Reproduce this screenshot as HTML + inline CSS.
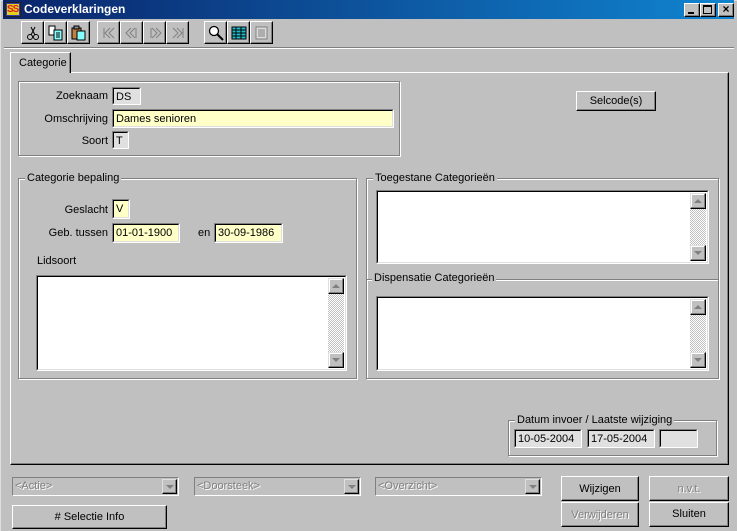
<!DOCTYPE html>
<html><head><meta charset="utf-8">
<style>
*{box-sizing:border-box;margin:0;padding:0}
body{width:737px;height:531px;background:#c0c0c0;font-family:"Liberation Sans",sans-serif;font-size:11px;color:#000;position:relative;overflow:hidden}
.a{position:absolute}
.in{position:absolute;border-top:1px solid #808080;border-left:1px solid #808080;border-right:1px solid #fff;border-bottom:1px solid #fff;}
.in::before{content:"";position:absolute;left:0;top:0;right:0;bottom:0;border-top:1px solid #000;border-left:1px solid #000;border-right:1px solid #dfdfdf;border-bottom:1px solid #dfdfdf}
.in span{position:absolute;left:3px;top:3px;white-space:nowrap}
.g{background:#e0e0e0}.y{background:#ffffc8}.w{background:#fff}
.grp{position:absolute;border:1px solid #808080;box-shadow:1px 1px 0 #fff, inset 1px 1px 0 #fff}
.lg{position:absolute;background:#c0c0c0;padding:0 2px;top:-7px;left:6px;white-space:nowrap}
.lbl{position:absolute;white-space:nowrap;text-align:right}
.btn{position:absolute;background:#c0c0c0;border-top:1px solid #fff;border-left:1px solid #fff;border-right:1px solid #000;border-bottom:1px solid #000;box-shadow:inset -1px -1px 0 #808080;text-align:center;white-space:nowrap}
.dis{color:#808080;text-shadow:1px 1px 0 #fff}
.sb{position:absolute;right:2px;top:2px;bottom:2px;width:16px;background-image:repeating-conic-gradient(#c0c0c0 0 25%,#fff 0 50%);background-size:2px 2px}
.sbb{position:absolute;left:0;width:16px;height:16px;background:#c0c0c0;border-top:1px solid #dfdfdf;border-left:1px solid #dfdfdf;border-right:1px solid #000;border-bottom:1px solid #000;box-shadow:inset -1px -1px 0 #808080,inset 1px 1px 0 #fff}
.up::after{content:"";position:absolute;left:3px;top:5px;border-left:4px solid transparent;border-right:4px solid transparent;border-bottom:4px solid #808080}
.dn::after{content:"";position:absolute;left:3px;top:5px;border-left:4px solid transparent;border-right:4px solid transparent;border-top:4px solid #808080}
.tb{position:absolute;top:21px;width:23px;height:23px;background:#c0c0c0;border-top:1px solid #fff;border-left:1px solid #fff;border-right:1px solid #000;border-bottom:1px solid #000;box-shadow:inset -1px -1px 0 #808080}
.tb svg{position:absolute;left:3px;top:3px}
.cb{position:absolute;height:19px;background:#c0c0c0;border-top:1px solid #808080;border-left:1px solid #808080;border-right:1px solid #fff;border-bottom:1px solid #fff;color:#808080}
.cb span{position:absolute;left:2px;top:2px;text-shadow:1px 1px 0 #fff}
.cb i{position:absolute;right:1px;top:1px;width:15px;height:15px;border-top:1px solid #dfdfdf;border-left:1px solid #dfdfdf;border-right:1px solid #000;border-bottom:1px solid #000;box-shadow:inset -1px -1px 0 #808080}
.cb i::after{content:"";position:absolute;left:3px;top:5px;border-left:4px solid transparent;border-right:4px solid transparent;border-top:4px solid #808080}
</style></head><body>
<div class="a" style="left:0;top:0;width:737px;height:531px;border-left:1px solid #dfdfdf;border-top:1px solid #dfdfdf;"></div>
<div class="a" style="left:3px;top:0;width:731px;height:19px;background:linear-gradient(90deg,#0a246a,#1084d0)"></div>
<div class="a" style="left:5px;top:2px;width:16px;height:15px;background:#3a3aa0;border:1px solid #222"><div class="a" style="left:1px;top:1px;width:12px;height:11px;background:#e0d020;color:#e02020;font-weight:bold;font-size:10px;line-height:11px;letter-spacing:-1px">SS</div></div>
<div class="a" style="left:24px;top:2px;color:#fff;font-weight:bold;font-size:12px">Codeverklaringen</div>
<div class="btn" style="left:684px;top:3px;width:16px;height:14px"><div class="a" style="left:3px;top:8px;width:6px;height:2px;background:#000"></div></div>
<div class="btn" style="left:700px;top:3px;width:16px;height:14px"><div class="a" style="left:2px;top:1px;width:9px;height:9px;border:1px solid #000;border-top-width:2px"></div></div>
<div class="btn" style="left:718px;top:3px;width:16px;height:14px;font-weight:bold;line-height:11px;font-size:12px">×</div>
<div class="tb" style="left:21px"><svg width="16" height="16"><circle cx="5" cy="12" r="2.5" fill="none" stroke="#000"/><circle cx="11" cy="12" r="2.5" fill="none" stroke="#000"/><path d="M6 10L10 2M10 10L6 2" stroke="#000"/></svg></div>
<div class="tb" style="left:44px"><svg width="16" height="16"><path d="M1 1h6v9H1z" fill="#fff" stroke="#000"/><path d="M6 5h8v10H6z" fill="#8ff" stroke="#000"/><path d="M8 8h4M8 10h4M8 12h4" stroke="#000"/></svg></div>
<div class="tb" style="left:67px"><svg width="16" height="16"><path d="M1 3h9v11H1z" fill="#c08040" stroke="#000"/><path d="M3 1h5v3H3z" fill="#888" stroke="#000"/><path d="M6 6h8v9H6z" fill="#8ff" stroke="#000"/></svg></div>
<div class="tb" style="left:97px"><svg width="16" height="16" stroke="#808080" fill="none"><path d="M3 3v10M13 3l-5 5 5 5M9 3l-5 5 5 5"/></svg></div>
<div class="tb" style="left:120px"><svg width="16" height="16" stroke="#808080" fill="none"><path d="M11 3l-5 5 5 5M7 3L2 8l5 5M12 3v10"/></svg></div>
<div class="tb" style="left:143px"><svg width="16" height="16" stroke="#808080" fill="none"><path d="M4 3v10M5 3l5 5-5 5M9 3l5 5-5 5"/></svg></div>
<div class="tb" style="left:166px"><svg width="16" height="16" stroke="#808080" fill="none"><path d="M3 3l5 5-5 5M7 3l5 5-5 5M13 3v10"/></svg></div>
<div class="tb" style="left:204px"><svg width="16" height="16"><circle cx="6" cy="6" r="4.5" fill="#fff" stroke="#000" stroke-width="1.3"/><path d="M9 9l6 6" stroke="#000" stroke-width="2"/></svg></div>
<div class="tb" style="left:227px"><svg width="16" height="16"><rect x="1" y="2" width="14" height="12" fill="#2bc" stroke="#000"/><path d="M1 5h14M1 8h14M1 11h14M5 2v12M10 2v12" stroke="#000"/></svg></div>
<div class="tb" style="left:250px"><svg width="16" height="16"><rect x="2" y="2" width="11" height="12" fill="#ddd" stroke="#808080"/><path d="M4 5h7M4 7h7M4 9h7M4 11h7" stroke="#808080"/></svg></div>
<div class="a" style="left:4px;top:47px;width:730px;height:2px;border-top:1px solid #808080;border-bottom:1px solid #fff"></div>
<div class="a" style="left:10px;top:52px;width:61px;height:21px;border-top:1px solid #fff;border-left:1px solid #fff;border-right:1px solid #000;box-shadow:inset -1px 0 #808080;background:#c0c0c0;z-index:2;padding:4px 0 0 8px">Categorie</div>
<div class="a" style="left:10px;top:72px;width:719px;height:393px;border-top:1px solid #fff;border-left:1px solid #fff;border-right:1px solid #000;border-bottom:1px solid #000;box-shadow:inset -1px -1px 0 #808080"></div>
<div class="grp" style="left:18px;top:81px;width:382px;height:75px"></div>
<div class="lbl" style="right:629px;top:90px">Zoeknaam</div>
<div class="in g" style="left:112px;top:87px;width:29px;height:18px"><span>DS</span></div>
<div class="lbl" style="right:629px;top:113px">Omschrijving</div>
<div class="in y" style="left:112px;top:109px;width:282px;height:19px"><span>Dames senioren</span></div>
<div class="lbl" style="right:629px;top:135px">Soort</div>
<div class="in g" style="left:112px;top:131px;width:17px;height:18px"><span>T</span></div>
<div class="btn" style="left:576px;top:91px;width:80px;height:20px;padding-top:3px">Selcode(s)</div>
<div class="grp" style="left:18px;top:178px;width:339px;height:201px"><div class="lg">Categorie bepaling</div></div>
<div class="lbl" style="right:629px;top:204px">Geslacht</div>
<div class="in y" style="left:112px;top:199px;width:18px;height:20px"><span>V</span></div>
<div class="lbl" style="right:629px;top:227px">Geb. tussen</div>
<div class="in y" style="left:112px;top:223px;width:68px;height:20px"><span>01-01-1900</span></div>
<div class="lbl" style="left:198px;top:227px">en</div>
<div class="in y" style="left:214px;top:223px;width:69px;height:20px"><span>30-09-1986</span></div>
<div class="lbl" style="left:37px;top:255px">Lidsoort</div>
<div class="in w" style="left:36px;top:275px;width:311px;height:96px"><div class="sb"><div class="sbb up" style="top:0"></div><div class="sbb dn" style="bottom:0"></div></div></div>
<div class="grp" style="left:366px;top:178px;width:353px;height:201px"><div class="lg">Toegestane Categorieën</div></div>
<div class="a" style="left:367px;top:279px;width:351px;height:2px;border-top:1px solid #808080;border-bottom:1px solid #fff"></div>
<div class="lg a" style="left:372px;top:272px">Dispensatie Categorieën</div>
<div class="in w" style="left:376px;top:190px;width:333px;height:74px"><div class="sb"><div class="sbb up" style="top:0"></div><div class="sbb dn" style="bottom:0"></div></div></div>
<div class="in w" style="left:376px;top:296px;width:333px;height:75px"><div class="sb"><div class="sbb up" style="top:0"></div><div class="sbb dn" style="bottom:0"></div></div></div>
<div class="grp" style="left:508px;top:420px;width:209px;height:36px"><div class="lg">Datum invoer / Laatste wijziging</div></div>
<div class="in g" style="left:514px;top:429px;width:68px;height:19px"><span>10-05-2004</span></div>
<div class="in g" style="left:587px;top:429px;width:68px;height:19px"><span>17-05-2004</span></div>
<div class="in g" style="left:659px;top:429px;width:39px;height:19px"></div>
<div class="cb" style="left:12px;top:477px;width:167px"><span>&lt;Actie&gt;</span><i></i></div>
<div class="cb" style="left:194px;top:477px;width:167px"><span>&lt;Doorsteek&gt;</span><i></i></div>
<div class="cb" style="left:375px;top:477px;width:167px"><span>&lt;Overzicht&gt;</span><i></i></div>
<div class="btn" style="left:561px;top:476px;width:78px;height:25px;padding-top:6px">Wijzigen</div>
<div class="btn dis" style="left:649px;top:476px;width:80px;height:25px;padding-top:6px">n.v.t.</div>
<div class="btn dis" style="left:561px;top:502px;width:78px;height:25px;padding-top:6px">Verwijderen</div>
<div class="btn" style="left:649px;top:502px;width:80px;height:25px;padding-top:5px">Sluiten</div>
<div class="btn" style="left:12px;top:505px;width:155px;height:24px;padding-top:5px"># Selectie Info</div>
</body></html>
